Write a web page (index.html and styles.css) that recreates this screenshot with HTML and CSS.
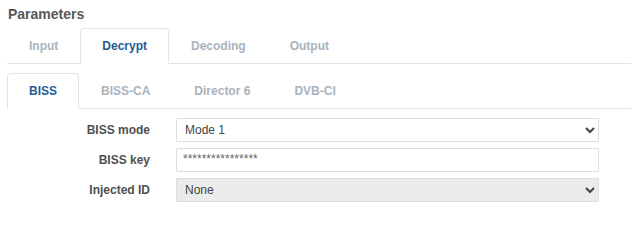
FILE: index.html
```html
<html>
<head>
<link rel="stylesheet" href="styles.css">
</head>
<body>
<div class="panel">
  <div class="panelTitle">Parameters</div>

  <div class="tabs">
    <div class="tab">Input</div>
    <div class="tab active">Decrypt</div>
    <div class="tab">Decoding</div>
    <div class="tab">Output</div>
  </div>

  <div class="tabs subTabs">
    <div class="tab active">BISS</div>
    <div class="tab">BISS-CA</div>
    <div class="tab">Director 6</div>
    <div class="tab">DVB-CI</div>
  </div>

  <div class="formGrid">
    <label class="fieldLabel">BISS mode</label>
    <select class="field">
      <option>Mode 1</option>
      <option>Mode E</option>
    </select>

    <label class="fieldLabel">BISS key</label>
    <input class="field keyField" type="text" value="****************">

    <label class="fieldLabel">Injected ID</label>
    <select class="field" disabled>
      <option>None</option>
    </select>
  </div>
</div>
</body>
</html>
```

FILE: styles.css
```css
body {
  margin: 0;
  background: #fff;
  font-family: "Liberation Sans", Arial, sans-serif;
}

.panel {
  padding: 4px 0 0 7px;
}

.panelTitle {
  font-size: 14px;
  font-weight: bold;
  color: #575757;
  line-height: 20px;
  padding-left: 1px;
}

.tabs {
  display: flex;
  margin-top: 4px;
  border-bottom: 1px solid #e4e4e4;
}

.subTabs {
  margin-top: 9px;
}

.tab {
  height: 34px;
  line-height: 34px;
  padding: 0 21px;
  margin-bottom: -1px;
  border: 1px solid transparent;
  border-radius: 4px 4px 0 0;
  font-size: 12px;
  font-weight: bold;
  color: #a9b3bd;
}

.tab.active {
  border-color: #e4e4e4;
  border-bottom-color: #fff;
  background: #fff;
  color: #1f5b95;
}

.formGrid {
  display: grid;
  grid-template-columns: 143px 423px;
  column-gap: 26px;
  row-gap: 6px;
  margin-top: 9px;
  align-items: center;
}

.fieldLabel {
  text-align: right;
  font-size: 12px;
  font-weight: bold;
  color: #505050;
}

.field {
  box-sizing: border-box;
  height: 24px;
  margin: 0;
  padding: 0 6px;
  border: 1px solid #dedede;
  border-radius: 1px;
  background-color: #fff;
  font-family: "Liberation Sans", Arial, sans-serif;
  font-size: 12px;
  color: #444;
  outline: none;
}

.keyField {
  color: #666;
  padding-bottom: 3px;
}

select.field {
  padding: 0 4px;
}

select.field:disabled {
  background-color: #ebebeb;
  color: #444;
  opacity: 1;
}
```
